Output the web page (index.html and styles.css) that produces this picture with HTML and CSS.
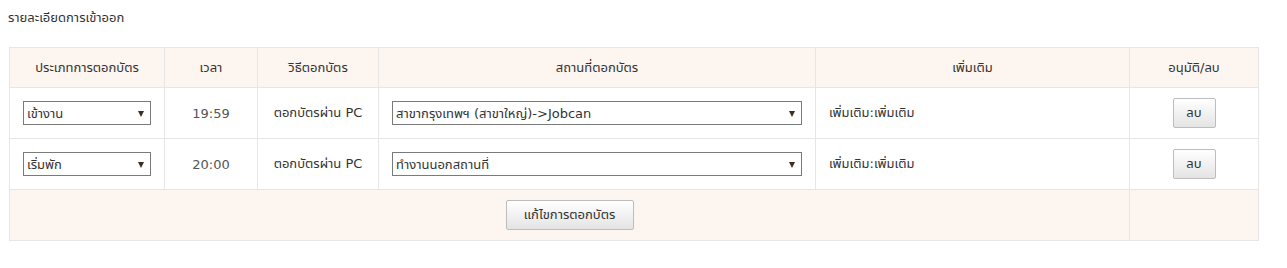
FILE: index.html
```html
<!DOCTYPE html>
<html lang="th">
<head>
  <meta charset="UTF-8" />
  <title>รายละเอียดการเข้าออก</title>
  <link rel="stylesheet" href="styles.css">
</head>
<body>

  <h2 class="section-title">รายละเอียดการเข้าออก</h2>

  <table class="stamp-table">
    <thead>
      <tr>
        <th class="col-type">ประเภทการตอกบัตร</th>
        <th class="col-time">เวลา</th>
        <th class="col-method">วิธีตอกบัตร</th>
        <th class="col-place">สถานที่ตอกบัตร</th>
        <th class="col-note">เพิ่มเติม</th>
        <th class="col-action">อนุมัติ/ลบ</th>
      </tr>
    </thead>
    <tbody>
      <tr>
        <td>
          <span class="select-wrap type-select">
            <select><option>เข้างาน</option></select>
          </span>
        </td>
        <td class="center time">19:59</td>
        <td class="center">ตอกบัตรผ่าน PC</td>
        <td>
          <span class="select-wrap place-select">
            <select><option>สาขากรุงเทพฯ (สาขาใหญ่)-&gt;Jobcan</option></select>
          </span>
        </td>
        <td class="note">เพิ่มเติม:เพิ่มเติม</td>
        <td class="center"><button class="btn btn-small">ลบ</button></td>
      </tr>
      <tr>
        <td>
          <span class="select-wrap type-select">
            <select><option>เริ่มพัก</option></select>
          </span>
        </td>
        <td class="center time">20:00</td>
        <td class="center">ตอกบัตรผ่าน PC</td>
        <td>
          <span class="select-wrap place-select">
            <select><option>ทำงานนอกสถานที่</option></select>
          </span>
        </td>
        <td class="note">เพิ่มเติม:เพิ่มเติม</td>
        <td class="center"><button class="btn btn-small">ลบ</button></td>
      </tr>
    </tbody>
    <tfoot>
      <tr>
        <td colspan="5" class="center"><button class="btn btn-edit">แก้ไขการตอกบัตร</button></td>
        <td></td>
      </tr>
    </tfoot>
  </table>

</body>
</html>
```

FILE: styles.css
```css
body {
  margin: 0;
  padding: 0 9px;
  font-family: "DejaVu Sans", Tahoma, "Noto Sans Thai", sans-serif;
  font-size: 13px;
  color: #333;
  background: #fff;
}

.section-title {
  font-size: 13px;
  font-weight: normal;
  margin: 0;
  padding: 9px 0 0 0;
  margin-left: -1px;
  line-height: 18px;
  height: 38px;
  color: #333;
}

.stamp-table {
  width: 1250px;
  border-collapse: collapse;
  table-layout: fixed;
}

.stamp-table th,
.stamp-table td {
  border: 1px solid #e6e6e6;
  padding: 0 13px;
  vertical-align: middle;
}

.stamp-table th {
  background: #fdf5ef;
  font-weight: normal;
  height: 39px;
  text-align: center;
  color: #333;
}

.stamp-table tbody td {
  height: 50px;
}

.stamp-table tfoot td {
  background: #fdf5ef;
  height: 50px;
}

.col-type { width: 128px; }
.col-time { width: 66px; }
.col-method { width: 94px; }
.col-place { width: 410px; }
.col-note { width: 287px; }
.col-action { width: auto; }

.center {
  text-align: center;
}

.time {
  color: #555;
}

.note {
  padding-left: 10px;
}

/* selects with a drawn arrow */
.select-wrap {
  position: relative;
  display: block;
  height: 24px;
  border: 1px solid #7a7a7a;
  box-sizing: border-box;
  background: #fff;
}

.select-wrap select {
  -webkit-appearance: none;
  appearance: none;
  border: none;
  background: transparent;
  width: 100%;
  height: 22px;
  padding: 0 0 0 3px;
  font-family: inherit;
  font-size: 13px;
  color: #333;
  outline: none;
}

.select-wrap::after {
  content: "";
  position: absolute;
  right: 6px;
  top: 9px;
  border-left: 3px solid transparent;
  border-right: 3px solid transparent;
  border-top: 6px solid #3a2f25;
  pointer-events: none;
}

.type-select { width: 128px; }
.place-select { width: 410px; }

.btn {
  font-family: inherit;
  font-size: 13px;
  color: #333;
  background: linear-gradient(to bottom, #ffffff, #e4e4e4);
  border: 1px solid #bdbdbd;
  border-radius: 2px;
  cursor: pointer;
  padding: 0;
}

.btn-small {
  width: 43px;
  height: 30px;
}

.btn-edit {
  width: 128px;
  height: 30px;
}
```
